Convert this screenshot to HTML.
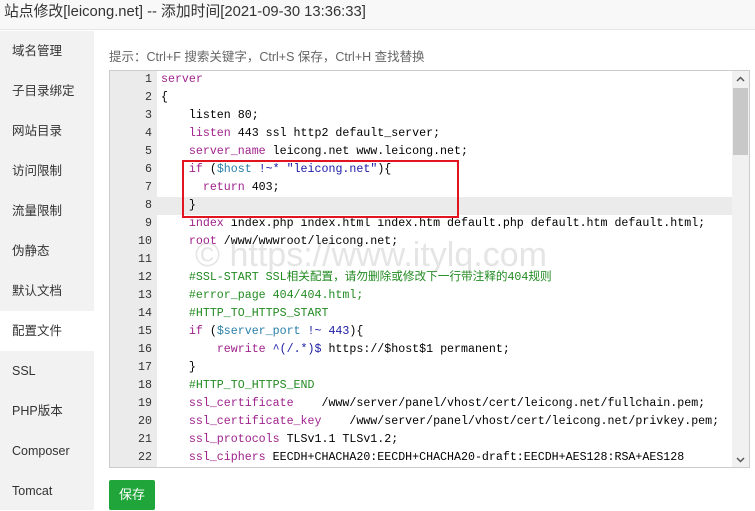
<!DOCTYPE html>
<html><head><meta charset="utf-8"><style>
*{margin:0;padding:0;box-sizing:border-box}
body{width:755px;height:510px;background:#fff;font-family:"Liberation Sans","Noto Sans CJK SC",sans-serif;position:relative;overflow:hidden}
.title{position:absolute;left:0;top:0;width:755px;height:30px;background:#f8f8f8;border-bottom:1px solid #e6e6e6;font-size:14.8px;color:#333;line-height:24px;padding-left:4px}
.side{position:absolute;left:0;top:31px;width:94px;height:479px;background:#f2f2f2}
.side div{height:40px;line-height:40px;padding-left:12px;font-size:12.5px;color:#333}
.side .act{background:#fff}
.tip{position:absolute;left:109px;top:46px;font-size:12.5px;color:#666}
.ed{position:absolute;left:109px;top:70px;width:641px;height:398px;border:1px solid #ccc;overflow:hidden;background:#fff}
.gut{position:absolute;left:0;top:0;width:47px;height:100%;background:#ebebeb}
.lines{position:absolute;left:0;top:0;font-family:"Liberation Mono","Noto Sans CJK SC",monospace;font-size:11.64px;width:622px}
.l{height:18px;line-height:18px;white-space:pre;position:relative}
.l .n{display:inline-block;width:42px;text-align:right;color:#333}
.l .c{position:absolute;left:51px;top:0;color:#000}
.hl{background:#ebebeb}
.k{color:#a0238c}.v{color:#2a7fa8}.s{color:#1a1aa6}.cm{color:#228b22}
.sb{position:absolute;right:0;top:0;width:17px;height:100%;background:#f1f1f1}
.th{position:absolute;left:1px;top:17px;width:15px;height:67px;background:#c8c8c8}
.box{position:absolute;left:182px;top:160px;width:277px;height:58px;border:2px solid #e1141f}
.btn{position:absolute;left:109px;top:480px;width:46px;height:30px;background:#20a53a;color:#fff;font-size:13px;line-height:30px;text-align:center;border-radius:2px}
.wm{position:absolute;left:195px;top:236px;font-size:34px;color:rgba(150,150,150,.25);white-space:nowrap}
</style></head><body>
<div class="title">站点修改[leicong.net] -- 添加时间[2021-09-30 13:36:33]</div>
<div class="side">
<div>域名管理</div><div>子目录绑定</div><div>网站目录</div><div>访问限制</div><div>流量限制</div><div>伪静态</div><div>默认文档</div><div class="act">配置文件</div><div>SSL</div><div>PHP版本</div><div>Composer</div><div>Tomcat</div>
</div>
<div class="tip">提示：Ctrl+F 搜索关键字，Ctrl+S 保存，Ctrl+H 查找替换</div>
<div class="ed">
<div class="gut"></div>
<div class="lines">
<div class="l"><span class="n">1</span><span class="c"><span class="k">server</span></span></div>
<div class="l"><span class="n">2</span><span class="c">{</span></div>
<div class="l"><span class="n">3</span><span class="c">    listen 80;</span></div>
<div class="l"><span class="n">4</span><span class="c">    <span class="k">listen</span> 443 ssl http2 default_server;</span></div>
<div class="l"><span class="n">5</span><span class="c">    <span class="k">server_name</span> leicong.net www.leicong.net;</span></div>
<div class="l"><span class="n">6</span><span class="c">    <span class="k">if</span> (<span class="v">$host</span> <span class="s">!~*</span> <span class="s">"leicong.net"</span>){</span></div>
<div class="l"><span class="n">7</span><span class="c">      <span class="k">return</span> 403;</span></div>
<div class="l hl"><span class="n">8</span><span class="c">    }</span></div>
<div class="l"><span class="n">9</span><span class="c">    <span class="k">index</span> index.php index.html index.htm default.php default.htm default.html;</span></div>
<div class="l"><span class="n">10</span><span class="c">    <span class="k">root</span> /www/wwwroot/leicong.net;</span></div>
<div class="l"><span class="n">11</span><span class="c"></span></div>
<div class="l"><span class="n">12</span><span class="c">    <span class="cm">#SSL-START SSL相关配置，请勿删除或修改下一行带注释的404规则</span></span></div>
<div class="l"><span class="n">13</span><span class="c">    <span class="cm">#error_page 404/404.html;</span></span></div>
<div class="l"><span class="n">14</span><span class="c">    <span class="cm">#HTTP_TO_HTTPS_START</span></span></div>
<div class="l"><span class="n">15</span><span class="c">    <span class="k">if</span> (<span class="v">$server_port</span> <span class="s">!~ 443</span>){</span></div>
<div class="l"><span class="n">16</span><span class="c">        <span class="k">rewrite</span> <span class="s">^(/.*)$</span> https://$host$1 permanent;</span></div>
<div class="l"><span class="n">17</span><span class="c">    }</span></div>
<div class="l"><span class="n">18</span><span class="c">    <span class="cm">#HTTP_TO_HTTPS_END</span></span></div>
<div class="l"><span class="n">19</span><span class="c">    <span class="k">ssl_certificate</span>    /www/server/panel/vhost/cert/leicong.net/fullchain.pem;</span></div>
<div class="l"><span class="n">20</span><span class="c">    <span class="k">ssl_certificate_key</span>    /www/server/panel/vhost/cert/leicong.net/privkey.pem;</span></div>
<div class="l"><span class="n">21</span><span class="c">    <span class="k">ssl_protocols</span> TLSv1.1 TLSv1.2;</span></div>
<div class="l"><span class="n">22</span><span class="c">    <span class="k">ssl_ciphers</span> EECDH+CHACHA20:EECDH+CHACHA20-draft:EECDH+AES128:RSA+AES128</span></div>
</div>
<div class="sb"><div class="th"></div>
<svg style="position:absolute;left:4px;top:5px" width="9" height="6"><path d="M1 5L4.5 1.5L8 5" stroke="#555" stroke-width="1.5" fill="none"/></svg>
<svg style="position:absolute;left:4px;top:386px" width="9" height="6"><path d="M1 1L4.5 4.5L8 1" stroke="#555" stroke-width="1.5" fill="none"/></svg>
</div>
</div>
<div class="box"></div>
<div class="wm">© https://www.itylq.com</div>
<div class="btn">保存</div>
</body></html>
